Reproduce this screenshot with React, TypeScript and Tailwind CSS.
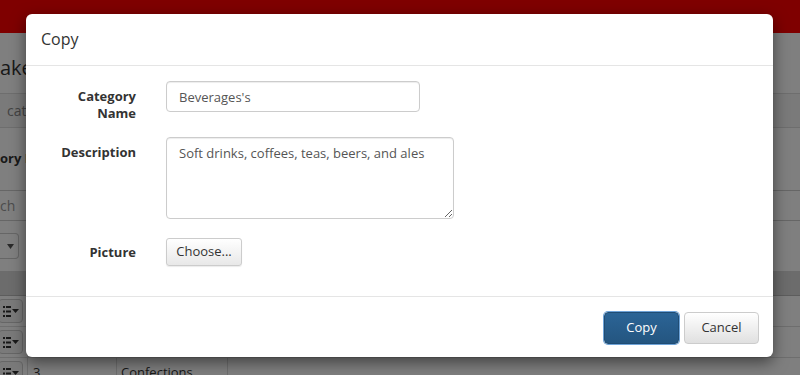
import React from 'react';

const font = { fontFamily: '"Open Sans", "Liberation Sans", sans-serif' };

const RowButton: React.FC = () => (
  <div className="w-[25px] h-[24px] -ml-[2px] border border-[#ccc] rounded-[4px] bg-[#f5f5f5] flex items-center justify-end pr-[3px] gap-[1px] text-[#333]">
    <svg width="8" height="11" viewBox="0 0 8 11" fill="currentColor">
      <rect x="0" y="0" width="2" height="2" />
      <rect x="3" y="0" width="5" height="2" />
      <rect x="0" y="4.5" width="2" height="2" />
      <rect x="3" y="4.5" width="5" height="2" />
      <rect x="0" y="9" width="2" height="2" />
      <rect x="3" y="9" width="5" height="2" />
    </svg>
    <svg width="7" height="4" viewBox="0 0 7 4" fill="currentColor">
      <path d="M0 0h7L3.5 4z" />
    </svg>
  </div>
);

const Background: React.FC = () => (
  <div className="absolute inset-0 bg-white text-[#333]" style={font}>
    <div className="h-[33px] bg-[#ff0000]" />
    <div className="h-[60px] flex items-center text-[20px] pt-[10px] leading-none">ake</div>
    <div className="h-[34px] bg-[#f5f5f5] border-t border-[#ddd] flex items-center pl-[7px] text-[14px] text-[#888]">
      cat
    </div>
    <div className="h-[63px] flex items-center text-[13px] font-bold border-t border-[#ddd]">ory N</div>
    <div className="h-[31px] border-t border-b border-[#ccc] flex items-center text-[14px] text-[#999]">ch</div>
    <div className="h-[50px] flex items-center">
      <div className="w-[19px] h-[26px] border border-[#ccc] rounded-r-[4px] border-l-0 flex items-center justify-end pr-[4px]">
        <svg width="7" height="5" viewBox="0 0 7 5" fill="#555">
          <path d="M0 0h7L3.5 5z" />
        </svg>
      </div>
    </div>
    <div className="h-[25px] bg-[#d8d8d8] border-b border-[#bbb]" />
    {[0, 1, 2].map((i) => (
      <div key={i} className="h-[31px] flex text-[13px] border-b border-[#ddd]">
        <div className="w-[28px] flex items-center border-r border-[#ddd]">
          <RowButton />
        </div>
        <div className="w-[89px] flex items-center pl-[5px] border-r border-[#ddd]">{i === 2 ? '3' : ''}</div>
        <div className="w-[111px] flex items-center pl-[4px] border-r border-[#ddd]">{i === 2 ? 'Confections' : ''}</div>
      </div>
    ))}
  </div>
);

const App: React.FC = () => {
  return (
    <div className="relative w-[800px] h-[375px] overflow-hidden" style={font}>
      <Background />
      <div className="absolute inset-0 bg-black/50" />
      <div className="absolute left-[26px] top-[14px] w-[747px] bg-white rounded-[6px] shadow-[0_5px_15px_rgba(0,0,0,0.5)] text-[13px] text-[#333]">
        <div className="h-[52px] px-[15px] flex items-center border-b border-[#e5e5e5]">
          <h4 className="text-[16px] text-[#333] leading-none pb-[2px]">Copy</h4>
        </div>
        <div className="px-[15px] pt-[15px] pb-[15px]">
          <div className="flex mb-[15px]">
            <label className="w-[95px] text-right font-bold leading-[17px] pt-[7px]">Category Name</label>
            <div className="ml-[30px]">
              <input
                readOnly
                value="Beverages's"
                className="w-[254px] h-[31px] border border-[#ccc] rounded-[4px] px-[12px] text-[13px] text-[#555] shadow-[inset_0_1px_1px_rgba(0,0,0,0.075)] outline-none"
                style={font}
              />
            </div>
          </div>
          <div className="flex mb-[19px]">
            <label className="w-[95px] text-right font-bold leading-[17px] pt-[7px]">Description</label>
            <div className="ml-[30px]">
              <textarea
                readOnly
                value="Soft drinks, coffees, teas, beers, and ales"
                className="block w-[288px] h-[82px] border border-[#ccc] rounded-[4px] px-[12px] py-[6px] text-[13px] leading-[18px] text-[#555] shadow-[inset_0_1px_1px_rgba(0,0,0,0.075)] outline-none"
                style={font}
              />
            </div>
          </div>
          <div className="flex mb-[15px]">
            <label className="w-[95px] text-right font-bold leading-[17px] pt-[6px]">Picture</label>
            <div className="ml-[30px]">
              <button
                className="h-[28px] w-[76px] border border-[#ccc] rounded-[3px] bg-gradient-to-b from-white to-[#e8e8e8] text-[13px] text-[#333] shadow-[0_1px_1px_rgba(0,0,0,0.08)]"
                style={font}
              >
                Choose...
              </button>
            </div>
          </div>
        </div>
        <div className="border-t border-[#e5e5e5] flex items-center justify-end pl-[15px] pr-[14px] pt-[15px] pb-[13px] gap-[5px]">
          <button
            className="h-[32px] w-[75px] rounded-[4px] bg-gradient-to-b from-[#2b6496] to-[#245580] border border-[#204d74] text-white text-[13px] shadow-[0_0_0_1px_#6ea3d8]"
            style={font}
          >
            Copy
          </button>
          <button
            className="h-[32px] w-[75px] rounded-[4px] bg-gradient-to-b from-white to-[#e0e0e0] border border-[#ccc] text-[#333] text-[13px]"
            style={font}
          >
            Cancel
          </button>
        </div>
      </div>
    </div>
  );
};

export default App;
